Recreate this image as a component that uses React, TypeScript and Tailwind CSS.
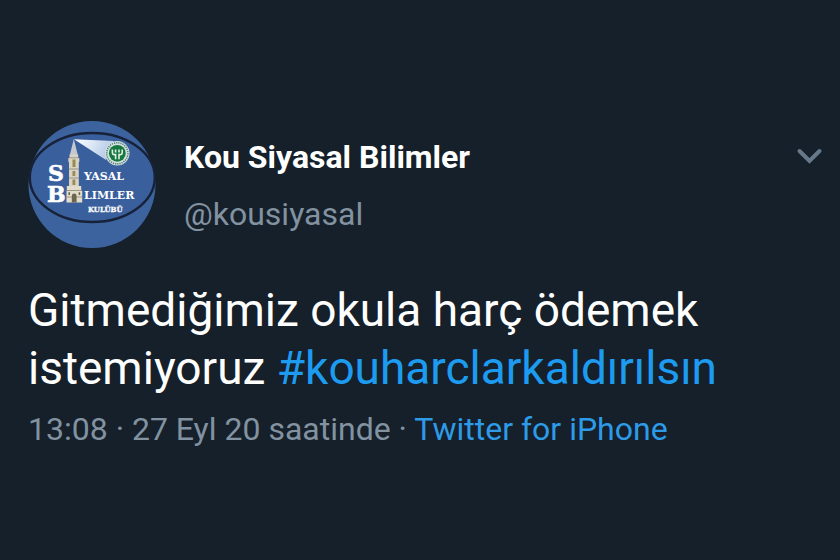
import React from "react";

const tweet = {
  name: "Kou Siyasal Bilimler",
  handle: "@kousiyasal",
  text: "Gitmediğimiz okula harç ödemek istemiyoruz",
  hashtag: "#kouharclarkaldırılsın",
  time: "13:08 · 27 Eyl 20 saatinde",
  source: "Twitter for iPhone",
};

function ClubLogo({ className }: { className?: string }) {
  return (
    <svg viewBox="0 0 128 128" className={className} role="img" aria-label="Siyasal Bilimler Kulübü">
      <defs>
        <linearGradient id="beam" x1="0" y1="0" x2="1" y2="0.3">
          <stop offset="0" stopColor="#ffffff" />
          <stop offset="0.5" stopColor="#dbe6f5" />
          <stop offset="1" stopColor="#b3c8e6" />
        </linearGradient>
      </defs>
      <circle cx="64" cy="63.5" r="63.5" fill="#3d639f" />
      <ellipse cx="64.3" cy="56.5" rx="62.5" ry="44.5" fill="#3a5f9d" stroke="#172238" strokeWidth="2.4" />

      {/* Light beam and round seal */}
      <path d="M46 18.2 L86 20 L78 39 Z" fill="url(#beam)" />
      <circle cx="89.3" cy="32.3" r="12.2" fill="#d5e2e2" />
      <circle cx="89.3" cy="32.3" r="10.6" fill="none" stroke="#4f7f70" strokeWidth="1.6" strokeDasharray="1.2 1" />
      <circle cx="89.3" cy="32.3" r="8.4" fill="#17783f" />
      <path
        d="M84.4 28.6 V32 Q84.4 33.6 86 33.6 H87.6 V38.2 M94.2 28.6 V32 Q94.2 33.6 92.6 33.6 H91 V38.2 M87.6 28.4 V31.4 M91 28.4 V31.4"
        fill="none"
        stroke="#dcefe2"
        strokeWidth="1.6"
      />

      {/* Clock tower */}
      <path d="M45.8 18 L49.8 34 H41.8 Z" fill="#c4c8cf" />
      <path d="M41.5 33.5 H50.2 V37 H51.3 V41 H50.8 V66 H41 V41 H40.4 V37 H41.5 Z" fill="#d9d3c3" />
      <path d="M41.5 36.8 H50.4 M41 48 H50.8 M41 57 H50.8" stroke="#8b8675" strokeWidth="0.8" />
      <path d="M44.5 38.5 H47.5 V46 H44.5 Z M44.5 50 H47.3 V55 H44.5 Z M44.5 58.5 H47.3 V64 H44.5 Z" fill="#9a8a55" />
      <path d="M38.8 65 H53.2 V70 H54.2 V81.5 H38.5 V70 H38.8 Z" fill="#e2dccb" />
      <path d="M38.5 69.5 H54 M38.5 76 H54" stroke="#96907e" strokeWidth="0.9" />
      <path d="M43.8 81.5 V75 A2.4 2.4 0 0 1 48.6 75 V81.5 Z M40.4 71.2 H42 V74 H40.4 Z M50.6 71.2 H52.2 V74 H50.6 Z" fill="#6c6650" />

      <g fill="#ffffff" fontFamily="'DejaVu Serif', serif" fontWeight="700">
        <text x="20" y="60" fontSize="22" stroke="#ffffff" strokeWidth="0.6">S</text>
        <text x="19" y="81" fontSize="22" stroke="#ffffff" strokeWidth="0.6">B</text>
        <text x="56" y="59" fontSize="11">YASAL</text>
        <text x="56" y="78" fontSize="11">LIMLER</text>
        <text x="60" y="91" fontSize="7" stroke="#ffffff" strokeWidth="0.3">KULÜBÜ</text>
      </g>
    </svg>
  );
}

export default function App() {
  return (
    <main className="min-h-screen bg-[#15202a] font-['Roboto',sans-serif] text-white">
      <article className="px-7 pt-[121px] pb-28">
        <header className="flex items-start">
          <ClubLogo className="size-32 shrink-0" />
          <div className="ml-7 min-w-0 flex-1 pt-2 leading-[57px]">
            <h1 className="text-[32px] font-bold">{tweet.name}</h1>
            <p className="text-[32px] text-[#8292a0]">{tweet.handle}</p>
          </div>
          <button type="button" aria-label="Tweet options" className="-mr-4 mt-5 p-1 text-[#66788a]">
            <svg viewBox="0 0 32 24" className="h-6 w-8" fill="none" stroke="currentColor" strokeWidth="4" strokeLinecap="round">
              <path d="M7.5 6 L17.5 16 L27.5 6" />
            </svg>
          </button>
        </header>

        <p className="mt-8 text-[46px] leading-[58px]">
          {tweet.text}{" "}
          <a href="#" className="text-[#1d9bf0]">
            {tweet.hashtag}
          </a>
        </p>

        <p className="mt-3 text-[32px] leading-10 text-[#8292a0]">
          {tweet.time} ·{" "}
          <a href="#" className="text-[#2d9be8]">
            {tweet.source}
          </a>
        </p>
      </article>
    </main>
  );
}
